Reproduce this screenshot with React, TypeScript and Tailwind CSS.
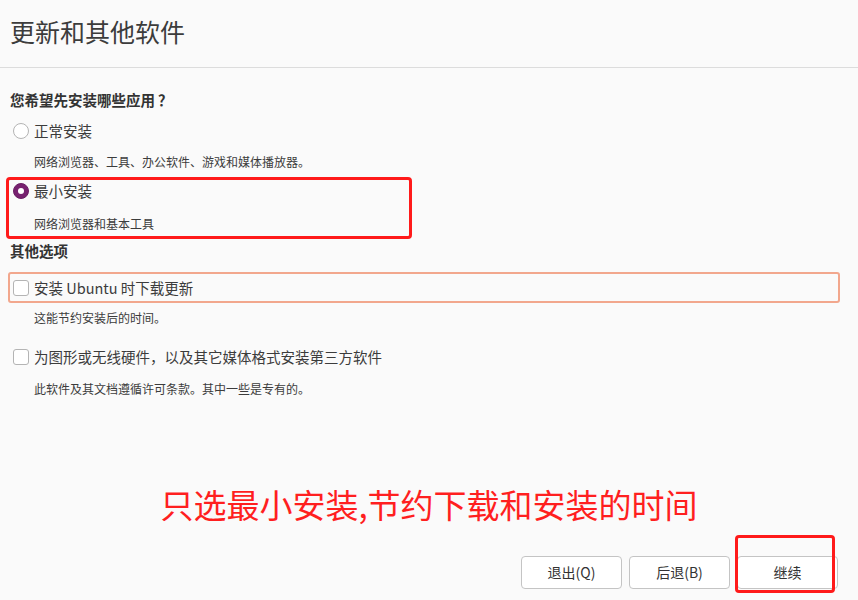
import React from 'react';

const font = { fontFamily: '"Noto Sans CJK SC", "Noto Sans", sans-serif' };

function Radio({ checked }: { checked?: boolean }) {
  if (checked) {
    return (
      <span className="w-4 h-4 rounded-full bg-[#77216f] border border-[#6a1d63] flex items-center justify-center shrink-0">
        <span className="w-[6px] h-[6px] rounded-full bg-white" />
      </span>
    );
  }
  return <span className="w-4 h-4 rounded-full bg-white border border-[#b4b4b4] shrink-0" />;
}

function Checkbox() {
  return <span className="w-4 h-4 rounded-[3px] bg-white border border-[#b4b4b4] shrink-0" />;
}

export default function App() {
  return (
    <div className="relative w-[858px] h-[600px] bg-[#fafafa] text-[#3c3c3c] flex flex-col overflow-hidden" style={font}>
      {/* header */}
      <div className="h-[68px] border-b border-[#dcdcdc] pl-[10px] pt-[14px] shrink-0">
        <h1 className="text-[25px] leading-[34px] font-normal text-[#3c3c3c]">更新和其他软件</h1>
      </div>

      {/* body */}
      <div className="flex flex-col pl-[10px] pr-[18px]">
        <div className="mt-[20px] h-[24px] flex items-center text-[14.5px] font-bold text-[#333]">
          您希望先安装哪些应用<span className="ml-[3px]">？</span>
        </div>

        <div className="mt-[7px] h-[24px] flex items-center gap-[5px] pl-[3px] text-[14.5px]">
          <Radio />
          <span>正常安装</span>
        </div>
        <div className="mt-[9px] h-[20px] flex items-center pl-[24px] text-[12px]">网络浏览器、工具、办公软件、游戏和媒体播放器。</div>

        <div className="mt-[7px] h-[24px] flex items-center gap-[5px] pl-[3px] text-[14.5px]">
          <Radio checked />
          <span>最小安装</span>
        </div>
        <div className="mt-[11px] h-[20px] flex items-center pl-[24px] text-[12px]">网络浏览器和基本工具</div>

        <div className="mt-[5px] h-[24px] flex items-center text-[14.5px] font-bold text-[#333]">其他选项</div>

        <div className="mt-[9px] -ml-[2px] h-[31px] flex items-center gap-[5px] pl-[3px] border-2 border-[#f2a78d] rounded-[3px] text-[14.5px]">
          <Checkbox />
          <span>安装 Ubuntu 时下载更新</span>
        </div>
        <div className="mt-[5px] h-[20px] flex items-center pl-[24px] text-[12px]">这能节约安装后的时间。</div>

        <div className="mt-[17px] h-[24px] flex items-center gap-[5px] pl-[3px] text-[14.5px]">
          <Checkbox />
          <span>为图形或无线硬件，以及其它媒体格式安装第三方软件</span>
        </div>
        <div className="mt-[10px] h-[20px] flex items-center pl-[24px] text-[12px]">此软件及其文档遵循许可条款。其中一些是专有的。</div>
      </div>

      {/* annotation text */}
      <div className="mt-[86px] h-[40px] flex items-center justify-center text-[33px] text-[#ff1f1f]">
        只选最小安装,节约下载和安装的时间
      </div>

      {/* buttons */}
      <div className="mt-auto mb-[11px] pr-[20px] flex justify-end gap-[7px]">
        {['退出(Q)', '后退(B)', '继续'].map((label) => (
          <button
            key={label}
            className="w-[101px] h-[33px] rounded-[4px] border border-[#c4c4c4] bg-white text-[14px] text-[#333] flex items-center justify-center"
          >
            {label}
          </button>
        ))}
      </div>

      {/* red annotation boxes */}
      <div className="absolute left-[6px] top-[177px] w-[406px] h-[62px] border-[3px] border-[#ff1a1a] rounded-[4px] pointer-events-none" />
      <div className="absolute left-[735px] top-[535px] w-[100px] h-[58px] border-[3px] border-[#ff1a1a] rounded-[4px] pointer-events-none" />
    </div>
  );
}
